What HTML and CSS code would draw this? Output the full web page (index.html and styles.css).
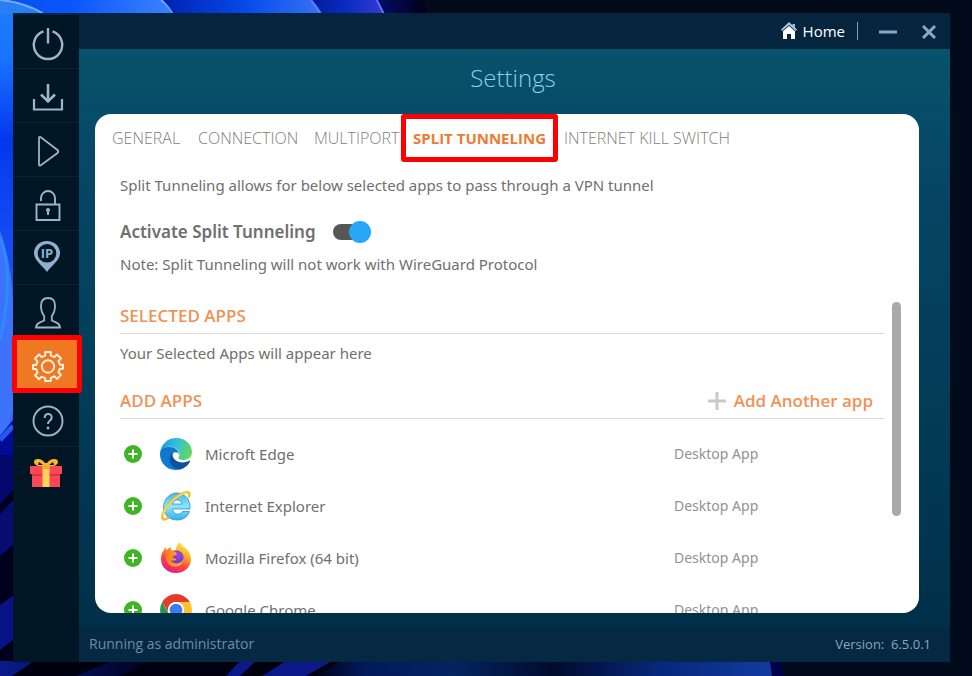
FILE: index.html
```html
<!DOCTYPE html>
<html lang="en">
<head>
<meta charset="utf-8">
<meta name="viewport" content="width=device-width, initial-scale=1">
<title>Settings</title>
<link rel="stylesheet" href="styles.css">
</head>
<body>
<svg class="wallpaper" viewBox="0 0 972 676" preserveAspectRatio="none" aria-hidden="true">
  <defs>
    <linearGradient id="wLeft" x1="0" y1="0" x2="0" y2="1">
      <stop offset="0" stop-color="#1f7cf8"/><stop offset=".12" stop-color="#1a74ff"/><stop offset=".3" stop-color="#0536ee"/>
      <stop offset=".37" stop-color="#0a40f0"/><stop offset="1" stop-color="#3a6cff"/>
    </linearGradient>
    <linearGradient id="wTopA" x1="0" x2="1"><stop offset="0" stop-color="#0a4fe8"/><stop offset=".4" stop-color="#0a55ff"/><stop offset="1" stop-color="#3b83fa"/></linearGradient>
    <linearGradient id="wTopB" x1="0" x2="1"><stop offset="0" stop-color="#0222b0"/><stop offset=".5" stop-color="#0548e8"/><stop offset="1" stop-color="#3572f5"/></linearGradient>
    <linearGradient id="wTopC" x1="0" x2="1"><stop offset="0" stop-color="#021c9c"/><stop offset=".5" stop-color="#0a2cc0"/><stop offset="1" stop-color="#3a38d8"/></linearGradient>
    <linearGradient id="wTopD" x1="0" x2="1"><stop offset="0" stop-color="#010d68"/><stop offset="1" stop-color="#000014"/></linearGradient>
    <linearGradient id="wBot" x1="0" x2="1"><stop offset="0" stop-color="#01031a"/><stop offset=".1" stop-color="#02195c"/><stop offset=".3" stop-color="#032460"/><stop offset=".52" stop-color="#010b2c"/><stop offset=".75" stop-color="#06287c"/><stop offset="1" stop-color="#123aa0"/></linearGradient>
    <linearGradient id="wStreak" x1="0" x2="1"><stop offset="0" stop-color="#0a1a8c"/><stop offset="1" stop-color="#00021c"/></linearGradient>
  </defs>
  <rect width="972" height="676" fill="#020b1c"/>
  <rect width="40" height="470" fill="url(#wLeft)"/>
  <path d="M0 230Q11 260 13 300L13 410Q8 430 0 440Z" fill="#3d72fb"/>
  <path d="M0 238Q15 275 0 340" fill="none" stroke="#2c8cff" stroke-width="3"/>
  <path d="M0 436L13 420V470H0Z" fill="#020b95"/>
  <path d="M0 440L13 426" stroke="#2458f0" stroke-width="5"/>
  <rect y="455" width="40" height="221" fill="#00001c"/>
  <path d="M0 455H13V490L0 505Z" fill="#03076c"/>
  <path d="M0 514L13 500V545L0 556Z" fill="#060c70"/>
  <path d="M0 605L13 596V640L0 650Z" fill="#0a1288"/>
  <path d="M0 0H165Q170 6 174 14H0Z" fill="url(#wTopA)"/>
  <path d="M0 0Q24 2 44 14H0Z" fill="#287ff2"/>
  <path d="M0 0Q24 2 44 14M161 0Q169 6 174 14" fill="none" stroke="#72aaff" stroke-width="2"/>
  <path d="M163 0H311Q317 7 321 14H174Q169 6 163 0Z" fill="url(#wTopB)"/>
  <path d="M311 0H377L385 14H321Q317 7 311 0Z" fill="url(#wTopC)"/>
  <path d="M311 0Q317 7 321 14M377 0L384 14" fill="none" stroke="#5f7cf8" stroke-width="2"/>
  <path d="M378 0H423L428 14H385Z" fill="url(#wTopD)"/>
  <rect y="661" width="772" height="15" fill="#000010"/>
  <path d="M12 676L34 661H0V676ZM76 676L112 661H150L120 676Z" fill="url(#wStreak)"/>
  <path d="M226 676L240 661H256L240 676ZM306 676L332 661H286L262 676Z" fill="#0a1888"/>
  <path d="M318 676L340 661H770L772 676Z" fill="url(#wBot)"/>
  <path d="M770 661H780L784 676H773Z" fill="#01024c"/>
</svg>

<div class="window">
  <nav class="sidebar" aria-label="Main">
    <button class="side" aria-label="Power"><svg viewBox="0 0 32 36"><path d="M11.500 6.400A14.200 14.200 0 1 0 20.500 6.400M16 3v15.500" stroke-width="2.400"/></svg></button>
    <button class="side" aria-label="Download"><svg viewBox="0 0 32 36"><path d="M2 20v10.500h28V20" stroke-width="2.200"/><path d="M16 5v17M9 15.500l7 7 7-7" stroke-width="2.600"/></svg></button>
    <button class="side" aria-label="Connect"><svg viewBox="0 0 32 36"><path d="M7 5q0-1.500 1.500-1l17 13q1.500 1.500 0 3l-17 12.500q-1.500.6-1.500-1z" stroke-width="1.800"/></svg></button>
    <button class="side" aria-label="Lock"><svg viewBox="0 0 32 36"><path d="M4.500 17.500h23v15.500h-23zM9 14V11a7 7 0 0 1 14 0v6" stroke-width="1.900"/><circle cx="16" cy="23" r="2" class="solid"/><path d="M16 23v5" stroke-width="2"/></svg></button>
    <button class="side" aria-label="Dedicated IP"><svg viewBox="0 0 32 36"><path class="solid" fill-rule="evenodd" d="M15 0C7.500 0 2 5.500 2 12c0 7.500 8 12 13 19 5-7 13-11.500 13-19C28 5.500 22.500 0 15 0zM15 3a9.300 9.300 0 1 1 0 18.600A9.300 9.300 0 0 1 15 3z"/><text x="15" y="17" text-anchor="middle">IP</text></svg></button>
    <button class="side" aria-label="Account"><svg viewBox="0 0 32 36"><path d="M16 3C10.500 3 9 6 9 11q0 6 3.200 10v4.500C8 27.500 4 28 4 32.500h24c0-4.500-4-5-8.200-7V21Q23 17 23 11c0-5-1.500-8-7-8z" stroke-width="1.800"/></svg></button>
    <button class="side side-active" aria-label="Settings" aria-current="page"><svg viewBox="0 0 32 36"><path stroke-width="2" stroke-linejoin="round" d="M13.200 4h5.600v3.600l3.600 1.500 2.600-2.600 4 4-2.600 2.600 1.500 3.600H31v4h-3.100l-1.500 3.600 2.600 2.600-4 4-2.600-2.600-3.600 1.500V33h-5.600v-2.800l-3.600-1.500L7 31.300l-4-4 2.600-2.600-1.500-3.600H1v-4h3.100l1.500-3.600L3 10.500l4-4 2.600 2.600 3.600-1.500z"/><circle cx="16" cy="18.500" r="6.200" stroke-width="2"/></svg></button>
    <button class="side" aria-label="Help"><svg viewBox="0 0 32 36"><circle cx="16" cy="18" r="14.500" stroke-width="1.900"/><path d="M12.700 15c0-5.500 7-5 7 -.6 0 3.300-3.700 3-3.700 6.600" stroke-width="2"/><circle cx="16" cy="25" r="1.400" class="solid"/></svg></button>
    <button class="side" aria-label="Gift"><svg class="gift" viewBox="0 0 32 36"><path fill="#fdb62f" d="M15 10C9 10 4 8 4 5q0-3 4-3 4 0 7 4h2q3-4 7-4 4 0 4 3c0 3-5 5-11 5z"/><path fill="#011425" d="M9 5l4 3H8zM23 5l-4 3h5z"/><path fill="#fb4855" d="M0 9h32v8h-2v13H2V17H0z"/><path fill="#df3244" d="M2 17h28v2H2z"/><path fill="#ffd45a" d="M12.500 9h7v21h-7z"/><path fill="#f8a92a" d="M12.500 9h7v3h-7z"/></svg></button>
  </nav>

  <div class="main">
    <header class="topbar">
      <a class="home" href="#">
        <svg viewBox="0 0 16 18" aria-hidden="true"><path fill="#a9bdd3" d="M8 0l3.500 3.200V2H14v3.500l2 2-1.200 1.500L8 3 1.200 9 0 7.500z"/><path fill="#fff" d="M8 4l6 5.200V17h-4v-5H6v5H2V9.200z"/></svg>
        <span>Home</span>
      </a>
      <span class="divider"></span>
      <button class="winbtn" aria-label="Minimize"><svg viewBox="0 0 20 16"><path d="M1 9h18"/></svg></button>
      <button class="winbtn" aria-label="Close"><svg viewBox="0 0 20 16"><path d="M4 3l12 12M16 3L4 15"/></svg></button>
    </header>

    <main class="content">
      <h1>Settings</h1>
      <section class="card">
        <div class="tabs" role="tablist">
          <button role="tab">GENERAL</button>
          <button role="tab">CONNECTION</button>
          <button role="tab">MULTIPORT</button>
          <button role="tab" class="tab-active" aria-selected="true">SPLIT TUNNELING</button>
          <button role="tab">INTERNET KILL SWITCH</button>
        </div>
        <div class="intro">
          <p>Split Tunneling allows for below selected apps to pass through a VPN tunnel</p>
          <div class="activate">
            <label for="split">Activate Split Tunneling</label>
            <input id="split" class="toggle" type="checkbox" checked>
          </div>
          <p>Note: Split Tunneling will not work with WireGuard Protocol</p>
        </div>
        <div class="pane">
          <div class="scroll">
            <div class="section-head"><h2>SELECTED APPS</h2></div>
            <p class="empty">Your Selected Apps will appear here</p>
            <div class="section-head">
              <h2>ADD APPS</h2>
              <button class="add-app"><svg viewBox="0 0 18 18" aria-hidden="true"><path d="M9 0v18M0 9h18"/></svg>Add Another app</button>
            </div>
            <ul class="apps">
              <li>
                <button class="plus" aria-label="Add Microft Edge"><svg viewBox="0 0 18 18"><circle cx="9" cy="9" r="9"/><path d="M9 4.500v9M4.500 9h9"/></svg></button>
                <svg class="logo" viewBox="0 0 32 32" aria-hidden="true">
                  <defs>
                    <linearGradient id="eTop" x1="0" y1=".3" x2="1" y2=".6"><stop offset="0" stop-color="#2496dc"/><stop offset=".45" stop-color="#30bfdf"/><stop offset="1" stop-color="#65d957"/></linearGradient>
                    <linearGradient id="eMid" x1="0" y1="0" x2=".5" y2="1"><stop offset="0" stop-color="#1272c5"/><stop offset="1" stop-color="#0a80dc"/></linearGradient>
                  </defs>
                  <path fill="url(#eTop)" d="M0 15C1 6 8 0 16 0c10 0 16 7 16 14 0 6-5 8-9 8-3 0-5-1-4.500-2.500C20 17 20 12.500 15 10 9 7 2 10 0 15z"/>
                  <path fill="url(#eMid)" d="M0 16C0 11 5 8.500 10 9c5 0 9 3.500 9 7.500C18 13 12 13 11.500 19c0 7 6 10.500 9.500 12C9 35 0 26 0 16z"/>
                  <path fill="#11519c" d="M12.500 15C7 20 10 31 20 31.400c5-1.200 8.500-4.500 10-8 .4-.9-.2-1-.8-.7C22 26.500 12 24 12.500 15z"/>
                </svg>
                <span class="name">Microft Edge</span><span class="kind">Desktop App</span>
              </li>
              <li>
                <button class="plus" aria-label="Add Internet Explorer"><svg viewBox="0 0 18 18"><circle cx="9" cy="9" r="9"/><path d="M9 4.500v9M4.500 9h9"/></svg></button>
                <svg class="logo" viewBox="0 0 32 32" aria-hidden="true">
                  <defs><linearGradient id="ie" x1="0" y1="0" x2="0" y2="1"><stop offset="0" stop-color="#45b7e5"/><stop offset=".5" stop-color="#8ee4fb"/><stop offset="1" stop-color="#31b4e4"/></linearGradient></defs>
                  <path fill="url(#ie)" stroke="#2597ce" stroke-width=".8" fill-rule="evenodd" d="M30 19H12.500c.5 6 8 6.500 10 2.500h7C27.500 27.500 22.500 30 17 30 9 30 3.500 24.500 3.500 17S9.500 3 17 3c8.500 0 13.500 7 13 16zM12.500 14H22c-.7-5.500-8.500-5.500-9.500 0z"/>
                  <path fill="none" stroke="#f3bd2b" stroke-width="2.600" stroke-linecap="round" d="M8 28c-4 2.500-7 2-5-4C5.500 16 16 5 25 2.500c4-1 5 .5 4 4"/>
                  <path fill="none" stroke="#fff0a0" stroke-width=".8" d="M3 26C4 18 15 6 27 2.300"/>
                </svg>
                <span class="name">Internet Explorer</span><span class="kind">Desktop App</span>
              </li>
              <li>
                <button class="plus" aria-label="Add Mozilla Firefox"><svg viewBox="0 0 18 18"><circle cx="9" cy="9" r="9"/><path d="M9 4.500v9M4.500 9h9"/></svg></button>
                <svg class="logo" viewBox="0 0 32 32" aria-hidden="true">
                  <defs>
                    <linearGradient id="ffA" x1=".8" y1="0" x2=".3" y2="1"><stop offset="0" stop-color="#fff04a"/><stop offset=".35" stop-color="#ffae24"/><stop offset=".65" stop-color="#fc493f"/><stop offset="1" stop-color="#e5178a"/></linearGradient>
                    <radialGradient id="ffB" cx=".6" cy=".3" r=".8"><stop offset="0" stop-color="#a43fe4"/><stop offset="1" stop-color="#5146c8"/></radialGradient>
                    <linearGradient id="ffC" x1="0" x2="1"><stop offset="0" stop-color="#ff7522"/><stop offset="1" stop-color="#ffbd2b"/></linearGradient>
                  </defs>
                  <path fill="url(#ffA)" d="M1 17c0-4 1-7 3-9l1-3 2 3q2-2.500 4-3l-.5 3H16c0-4 2-6.500 4-8 1 4 5 5 7.500 8 2 2.500 3.500 5.500 3.500 9 0 8-6.500 14-15 14S1 25 1 17z"/>
                  <circle cx="16.500" cy="15.500" r="7" fill="url(#ffB)"/>
                  <path fill="url(#ffC)" d="M7 8l4-3-.5 4q2-.5 3 0c2 .8 3.300 2.200 3.500 3-1 1.800-4 1.200-4.500 3.500 1 1.500 3 1 4 1.300-1.500 3-4 1.800-5.500 1.200C12 22 19 23.500 23 18c-1 8-12 9-16 2-2-4-2-9 0-12z"/>
                </svg>
                <span class="name">Mozilla Firefox (64 bit)</span><span class="kind">Desktop App</span>
              </li>
              <li>
                <button class="plus" aria-label="Add Google Chrome"><svg viewBox="0 0 18 18"><circle cx="9" cy="9" r="9"/><path d="M9 4.500v9M4.500 9h9"/></svg></button>
                <svg class="logo" viewBox="0 0 32 32" aria-hidden="true">
                  <path fill="#fcc32c" d="M16 8h13.800A16 16 0 0 1 16 32l7-12z"/>
                  <path fill="#259a51" d="M2.200 8A16 16 0 0 0 16 32l7-12H9z"/>
                  <path fill="#e33b2e" d="M2.200 8A16 16 0 0 1 29.800 8H16a8 8 0 0 0-7.500 10.500z"/>
                  <circle cx="16" cy="16" r="8" fill="#fff"/><circle cx="16" cy="16" r="6.300" fill="#3b7ded"/>
                </svg>
                <span class="name">Google Chrome</span><span class="kind">Desktop App</span>
              </li>
            </ul>
          </div>
          <div class="thumb"></div>
        </div>
      </section>
    </main>

    <footer class="status"><span>Running as administrator</span><span class="version">Version:&nbsp; 6.5.0.1</span></footer>
  </div>
</div>
</body>
</html>
```
FILE: styles.css
```css
* { box-sizing: border-box; }

body {
  margin: 0;
  height: 100vh;
  padding: 13px 22px 14px 13px;
  background: #020b1c;
  color: #6f6f6f;
  font: 15px/22px "Noto Sans", "Open Sans", sans-serif;
  overflow: hidden;
}

h1, h2, p, ul { margin: 0; padding: 0; }
button { margin: 0; padding: 0; border: 0; background: none; color: inherit; font: inherit; cursor: pointer; }

.wallpaper { position: absolute; inset: 0; width: 100%; height: 100%; }

.window { position: relative; display: flex; height: 100%; background: #05253f; }

/* Sidebar */
.sidebar { display: flex; flex-direction: column; flex: none; width: 66px; margin-top: 2px; background: #011625; }
.side { position: relative; display: flex; align-items: center; justify-content: center; height: 54px; padding: 2px 0 0 4px; border-bottom: 1px solid #0a2233; color: #9db4c9; }
.side:last-child { border-bottom: 0; }
.side svg { width: 32px; height: 36px; fill: none; stroke: currentColor; }
.side .solid { fill: currentColor; stroke: none; }
.side .gift { stroke: none; margin-right: 4px; }
.side text { fill: currentColor; stroke: none; font: bold 13px "Open Sans", sans-serif; }
.side:nth-child(5) { color: #8fb1d0; }
.side-active { padding-top: 0; background: #f07822; color: #fff0e0; border-bottom: 0; }
.side-active::after { content: ""; position: absolute; z-index: 1; inset: -4px -3px 0 -1px; border: 5px solid #fe0000; border-radius: 3px; }

/* Main column */
.main { display: flex; flex-direction: column; flex: 1; min-width: 0; }
.topbar { display: flex; align-items: center; justify-content: flex-end; flex: none; height: 36px; padding-right: 11px; background: #05253f; font-family: "Open Sans", sans-serif; }
.home { display: flex; align-items: center; gap: 6px; color: #fff; text-decoration: none; }
.home svg { width: 16px; height: 18px; }
.divider { width: 1px; height: 18px; margin: 0 20px 0 12px; background: #7f9fba; }
.winbtn { display: flex; width: 20px; margin-right: 21px; }
.winbtn:last-child { margin-right: 0; }
.winbtn svg { width: 20px; height: 16px; fill: none; stroke: #83a8c8; stroke-width: 3; }

.content { display: flex; flex-direction: column; flex: 1; min-height: 0; padding: 12px 31px 14px 16px; background: linear-gradient(#07536b, #064866 18%, #003049); }
h1 { margin: 0 -12px 20px 0; color: #8ecdf5; font: 300 24px/33px "Open Sans", sans-serif; text-align: center; }

.card { display: flex; flex-direction: column; flex: 1; min-height: 0; border-radius: 16px; background: #fff; overflow: hidden; }
.tabs { display: grid; grid-template-columns: 86px 116px 99px 151px auto; flex: none; padding: 13px 17px 0; font: 300 16px/22px "Open Sans", sans-serif; color: #808080; }
.tabs button { position: relative; justify-self: start; white-space: nowrap; }
.tabs .tab-active { color: #ee7b33; font-size: 15px; font-weight: 700; }
.tab-active::after { content: ""; position: absolute; inset: -13px -12px; border: 5px solid #fe0000; border-radius: 3px; }

.intro { flex: none; padding: 25px 25px 0; }
.activate { display: flex; align-items: center; gap: 17px; margin: 24px 0 9px; }
.activate label { font-size: 17px; line-height: 24px; font-weight: 600; }
.toggle { appearance: none; position: relative; width: 38px; height: 16px; margin: 0; border-radius: 8px; background: linear-gradient(90deg, #565656 30px, #fff 30px); }
.toggle::before { content: ""; position: absolute; top: -3px; right: 0; width: 22px; height: 22px; border-radius: 50%; background: #28a5f6; }
.toggle:not(:checked)::before { right: 16px; }

.pane { display: flex; flex: 1; min-height: 0; gap: 7px; padding: 27px 18px 0 25px; }
.scroll { flex: 1; overflow-y: auto; scrollbar-width: none; }
.thumb { flex: none; width: 9px; height: 214px; border-radius: 5px; background: #a9a9a9; }
.section-head { display: flex; justify-content: space-between; padding: 2px 12px 5px 0; border-bottom: 1px solid #dcdcdc; color: #ef9257; font-family: "Open Sans", sans-serif; }
h2 { font-size: 17px; line-height: 24px; font-weight: 600; }
.empty { padding: 8px 0 23px; }
.add-app { display: flex; align-items: center; gap: 8px; font-size: 17px; line-height: 24px; font-weight: 600; }
.add-app svg { width: 18px; height: 18px; stroke: #c9c9c9; stroke-width: 3; }
.apps { padding-top: 9px; list-style: none; }
.apps li { display: flex; align-items: center; height: 52px; padding-left: 4px; }
.plus { display: flex; margin-right: 18px; }
.plus svg { width: 18px; height: 18px; fill: #3fb526; }
.plus path { stroke: #fff; stroke-width: 2; }
.logo { flex: none; width: 32px; height: 32px; }
.name { flex: 1; padding-left: 13px; }
.kind { width: 211px; color: #929292; font-size: 14px; }

.status { display: flex; align-items: center; justify-content: space-between; flex: none; height: 35px; padding: 0 19px 2px 10px; background: #052943; color: #6f8ba3; font-family: "Open Sans", sans-serif; font-size: 14px; }
.version { color: #8fa5b8; font-size: 13px; }
```
